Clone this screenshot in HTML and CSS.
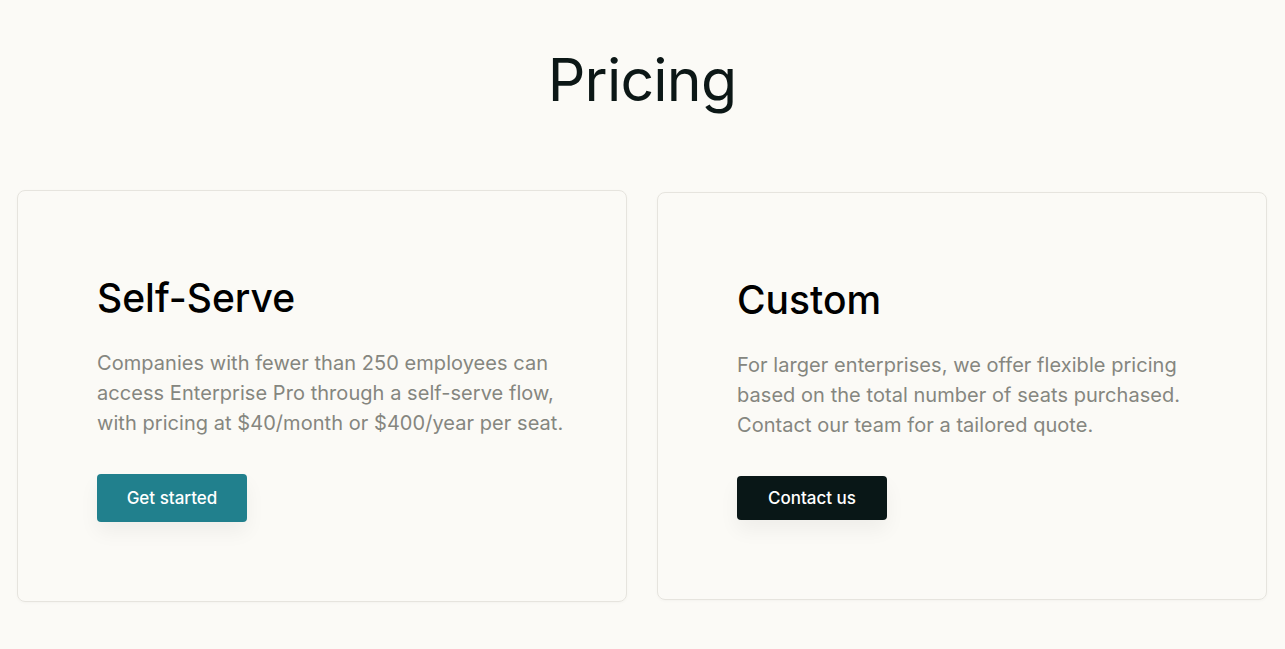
FILE: index.html
```html
<!DOCTYPE html>
<html lang="en">
<head>
  <meta charset="UTF-8">
  <title>Pricing</title>
  <link rel="stylesheet" href="styles.css">
</head>
<body>
  <section class="pricing">
    <h1 class="pricing-title">Pricing</h1>

    <div class="plans">
      <!-- Self-serve -->
      <div class="plan">
        <h2 class="plan-name">Self-Serve</h2>
        <p class="plan-text">
          Companies with fewer than 250 employees can access Enterprise Pro through a self-serve flow, with pricing at $40/month or $400/year per seat.
        </p>
        <a href="#" class="btn btn-teal">Get started</a>
      </div>

      <!-- Custom -->
      <div class="plan plan-custom">
        <h2 class="plan-name">Custom</h2>
        <p class="plan-text">
          For larger enterprises, we offer flexible pricing based on the total number of seats purchased. Contact our team for a tailored quote.
        </p>
        <a href="#" class="btn btn-dark">Contact us</a>
      </div>
    </div>
  </section>
</body>
</html>
```

FILE: styles.css
```css
html, body {
  margin: 0;
  padding: 0;
  background-color: #fbfaf6;
  color: #0c1716;
  font-family: Inter, "Liberation Sans", Arial, sans-serif;
}

.pricing {
  padding: 38px 18px 40px 17px;
}

.pricing-title {
  margin: 0;
  text-align: center;
  font-size: 59px;
  font-weight: 400;
  line-height: 84px;
  letter-spacing: -0.8px;
}

.plans {
  display: grid;
  grid-template-columns: 1fr 1fr;
  gap: 30px;
  margin-top: 68px;
  align-items: start;
}

.plan {
  border: 1px solid #e6e4de;
  border-radius: 8px;
  box-shadow: 0 1px 3px rgba(0, 0, 0, 0.03);
  padding: 84px 40px 79px 79px;
}

.plan-custom {
  margin-top: 2px;
}

.plan-name {
  margin: 0;
  font-size: 39px;
  font-weight: 500;
  line-height: 46px;
  color: #000;
}

.plan-text {
  margin: 27px 0 36px;
  font-size: 20px;
  line-height: 30px;
  color: #85867f;
  max-width: 478px;
  letter-spacing: 0.05px;
}

.btn {
  display: inline-block;
  width: 150px;
  height: 48px;
  line-height: 48px;
  text-align: center;
  border-radius: 4px;
  font-size: 17px;
  font-weight: 500;
  color: #fff;
  text-decoration: none;
  box-shadow: 0 10px 20px rgba(0, 0, 0, 0.05);
}

.btn-teal {
  background-color: #21808d;
}

.btn-dark {
  background-color: #091717;
  height: 44px;
  line-height: 44px;
}
```
